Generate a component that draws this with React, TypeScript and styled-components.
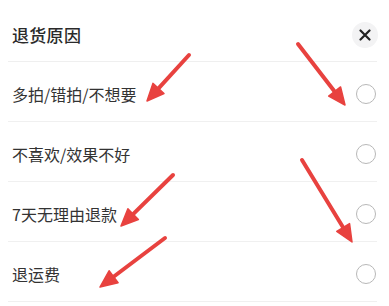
import React from 'react';
import styled, { createGlobalStyle } from 'styled-components';

const reasons = ['多拍/错拍/不想要', '不喜欢/效果不好', '7天无理由退款', '退运费'];

// annotation arrows drawn over the sheet: [tailX, tailY, tipX, tipY]
const arrows: [number, number, number, number][] = [
	[189, 55, 147, 101],
	[298, 44, 345, 105],
	[173, 175, 121, 226],
	[302, 160, 352, 242],
	[165, 238, 100, 287],
];

const headPoints = (x1: number, y1: number, x2: number, y2: number) => {
	const a = Math.atan2(y2 - y1, x2 - x1);
	const len = 17;
	const half = 7.5;
	const bx = x2 - Math.cos(a) * len;
	const by = y2 - Math.sin(a) * len;
	const px = -Math.sin(a) * half;
	const py = Math.cos(a) * half;
	return `${x2},${y2} ${bx + px},${by + py} ${bx - px},${by - py}`;
};

const App = () => (
	<>
		<GlobalStyle />
		<Sheet>
			<Header>
				<Title>退货原因</Title>
				<CloseButton aria-label="关闭">
					<svg width="12" height="12" viewBox="0 0 12 12">
						<path d="M1.5 1.5L10.5 10.5M10.5 1.5L1.5 10.5" stroke="#222" strokeWidth="2.2" strokeLinecap="round" />
					</svg>
				</CloseButton>
			</Header>
			<List>
				{reasons.map((r) => (
					<Row key={r}>
						<Label>{r}</Label>
						<Radio />
					</Row>
				))}
			</List>
			<Overlay width="389" height="306" viewBox="0 0 389 306">
				{arrows.map(([x1, y1, x2, y2], i) => {
					const a = Math.atan2(y2 - y1, x2 - x1);
					const ex = x2 - Math.cos(a) * 12;
					const ey = y2 - Math.sin(a) * 12;
					return (
						<g key={i}>
							<line x1={x1} y1={y1} x2={ex} y2={ey} stroke="#e8423f" strokeWidth="4" strokeLinecap="round" />
							<polygon points={headPoints(x1, y1, x2, y2)} fill="#e8423f" stroke="#e8423f" strokeWidth="1.5" strokeLinejoin="round" />
						</g>
					);
				})}
			</Overlay>
		</Sheet>
	</>
);

const GlobalStyle = createGlobalStyle`
	html, body {
		margin: 0;
		padding: 0;
		background: #fff;
	}
	body {
		font-family: "Noto Sans CJK SC", "Noto Sans", sans-serif;
	}
`;

const Sheet = styled.div`
	position: relative;
	width: 389px;
	height: 306px;
	overflow: hidden;
	background: #fff;
`;

const Header = styled.div`
	display: flex;
	align-items: center;
	justify-content: space-between;
	height: 62px;
	margin: 0 12px 0 8px;
	padding: 8px 0 0 4px;
	box-sizing: border-box;
	border-bottom: 1px solid #efefef;
`;

const Title = styled.h1`
	margin: 0;
	font-size: 17px;
	font-weight: 500;
	color: #2a2a2a;
	letter-spacing: 0.3px;
`;

const CloseButton = styled.button`
	display: flex;
	align-items: center;
	justify-content: center;
	width: 26px;
	height: 26px;
	margin-right: -1px;
	padding: 0;
	border: none;
	border-radius: 50%;
	background: #f3f3f4;
`;

const List = styled.div`
	display: flex;
	flex-direction: column;
	padding: 0 12px 0 8px;
`;

const Row = styled.div`
	display: flex;
	align-items: center;
	justify-content: space-between;
	height: 60px;
	padding: 4px 0 0 4px;
	box-sizing: border-box;
	border-bottom: 1px solid #f0f0f0;
`;

const Label = styled.span`
	font-size: 16px;
	color: #333;
`;

const Radio = styled.span`
	width: 18px;
	height: 18px;
	margin-right: 1px;
	border: 1.5px solid #b8b8b8;
	border-radius: 50%;
`;

const Overlay = styled.svg`
	position: absolute;
	left: 0;
	top: 0;
	pointer-events: none;
`;

export default App;
